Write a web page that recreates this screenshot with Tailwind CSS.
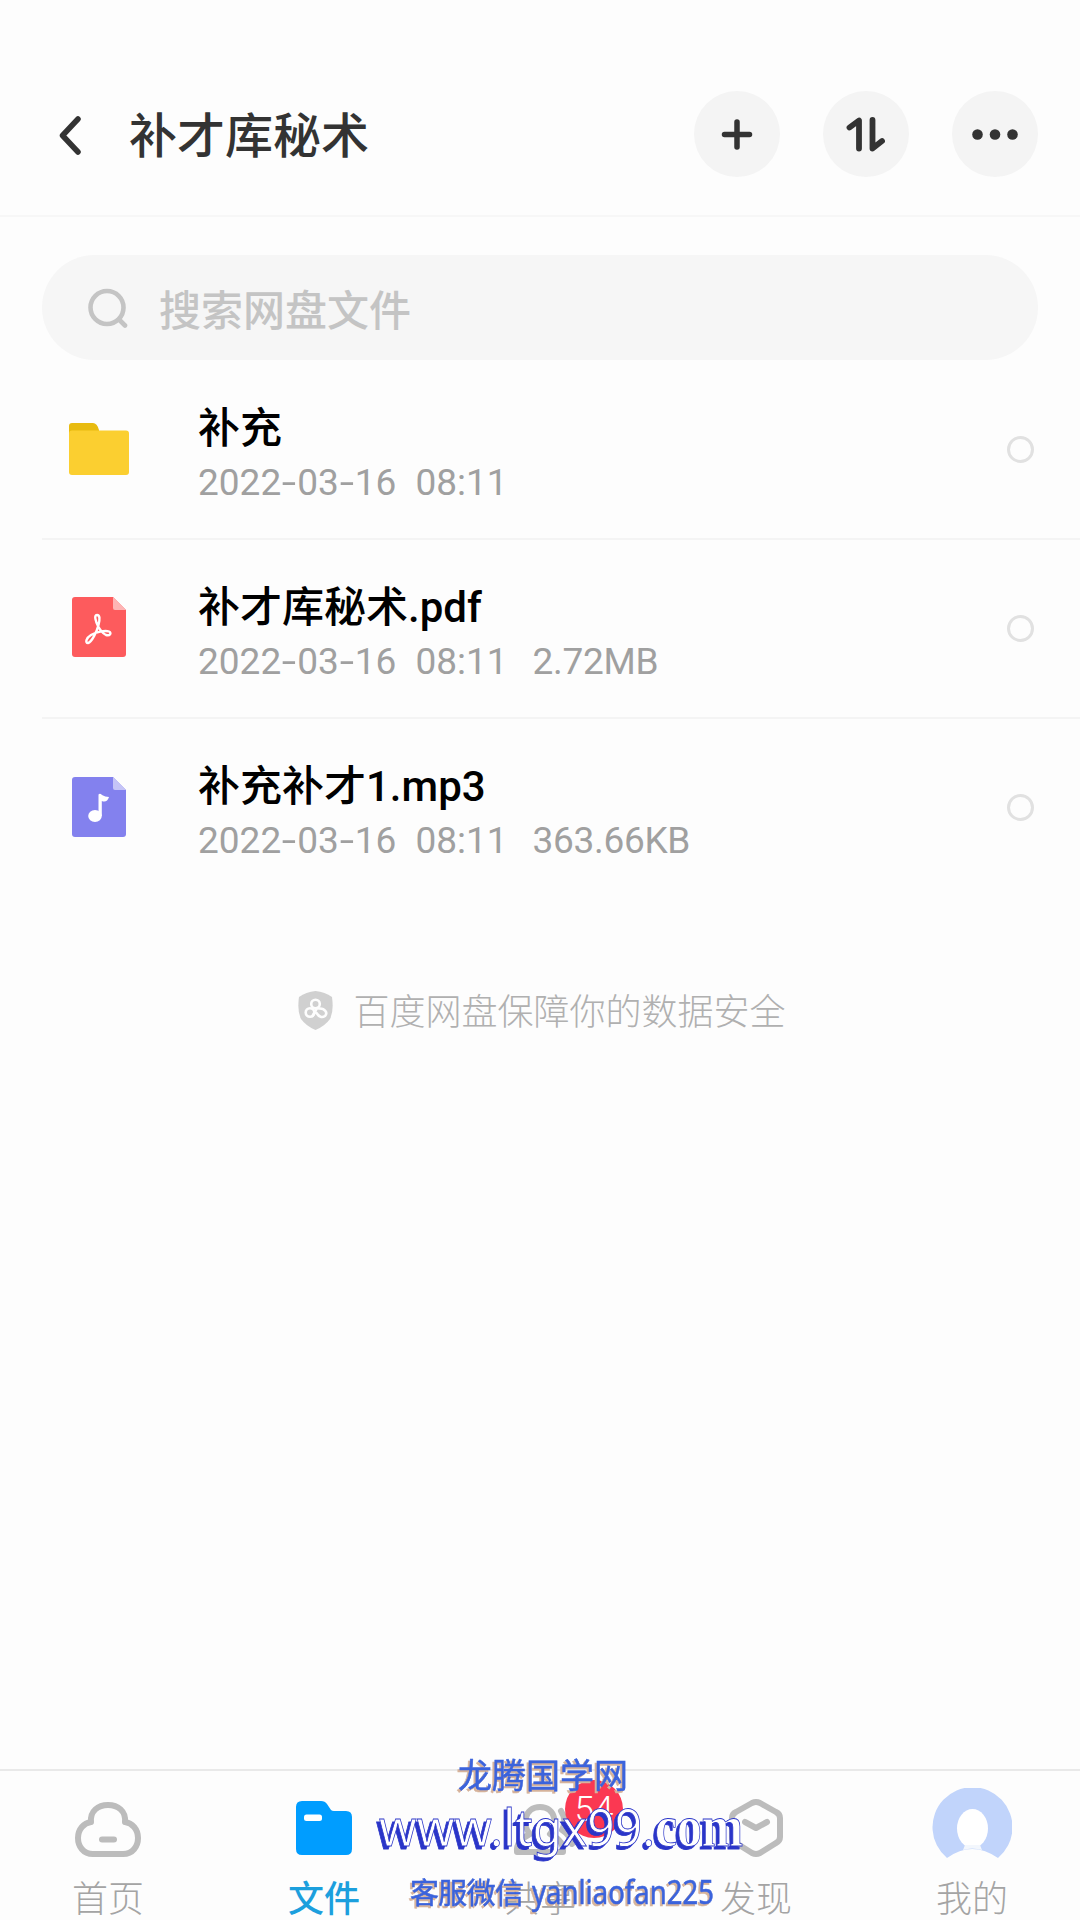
<!DOCTYPE html>
<html lang="zh-CN">

<head>
  <meta charset="UTF-8">
  <meta name="viewport" content="width=device-width, initial-scale=1.0">
  <title>补才库秘术</title>
  <script src="https://cdn.jsdelivr.net/npm/@tailwindcss/browser@4"></script>
</head>

<body class="bg-[#fdfdfd] font-['Roboto','Noto_Sans_CJK_SC',sans-serif]">
  <div class="relative flex flex-col w-[1080px] h-[1920px] overflow-hidden">

    <!-- Header -->
    <header class="flex items-center h-[217px] pt-[52px] pl-[58px] pr-[42px] border-b-2 border-[#f7f7f7]">
      <svg class="w-6 h-10 mt-1" viewBox="0 0 24 40" fill="none" stroke="#333" stroke-width="5.500" stroke-linecap="round" stroke-linejoin="round">
        <path d="M20 3L4.500 19.500L20 36" />
      </svg>
      <h1 class="ml-[47px] pt-1.5 text-[48px] leading-[60px] font-medium text-[#333]">补才库秘术</h1>
      <div class="ml-auto flex gap-[43px]">
        <button class="size-[86px] rounded-full bg-[#f4f4f4]">
          <svg viewBox="0 0 86 86" fill="none" stroke="#333" stroke-width="5.500" stroke-linecap="round">
            <path d="M30.500 43.500H55.500M43 31V56" />
          </svg>
        </button>
        <button class="size-[86px] rounded-full bg-[#f4f4f4]">
          <svg viewBox="0 0 86 86" fill="none" stroke="#333" stroke-width="5.800" stroke-linecap="round" stroke-linejoin="round">
            <path d="M26.500 36.500L36 29.500V57.500M49.500 29V57.500L59 50" />
          </svg>
        </button>
        <button class="size-[86px] rounded-full bg-[#f4f4f4]">
          <svg viewBox="0 0 86 86" fill="#333">
            <circle cx="25.500" cy="43.500" r="5.300" />
            <circle cx="43" cy="43.500" r="5.300" />
            <circle cx="60.500" cy="43.500" r="5.300" />
          </svg>
        </button>
      </div>
    </header>

    <!-- Search -->
    <div class="flex items-center mt-[38px] mx-[42px] h-[105px] pl-[46px] rounded-full bg-[#f6f6f6]">
      <svg class="w-10 h-10" viewBox="0 0 40 40" fill="none" stroke="#c4c4c4" stroke-width="4.600" stroke-linecap="round">
        <circle cx="19" cy="19.500" r="16.500" />
        <path d="M31 31.500L37 37.500" />
      </svg>
      <span class="ml-[31px] pt-2 text-[42px] leading-[60px] font-medium text-[#c4c4c4]">搜索网盘文件</span>
    </div>

    <!-- File list -->
    <ul>
      <li class="flex items-center h-[180px] ml-[42px] pr-[46px] border-b-2 border-[#f4f4f4]">
        <svg class="ml-[27px] w-[60px] h-[52px]" viewBox="0 0 60 52">
          <path d="M0 12V3Q0 0 3 0H24Q28 0 30 7V12Z" fill="#e8bb10" />
          <rect y="7.500" width="60" height="44.500" rx="3" fill="#fbcf30" />
        </svg>
        <div class="ml-[69px] pt-3">
          <p class="text-[42px] leading-[54px] font-medium text-black">补充</p>
          <p class="flex text-[37px] leading-[53px] text-[#a0a0a0]">
            <span>2022</span><span class="w-4 text-center scale-x-140">-</span><span>03</span><span class="w-4 text-center scale-x-140">-</span><span>16</span>
            <span class="ml-[19px]">08:11</span>
          </p>
        </div>
        <span class="ml-auto size-[27px] rounded-full border-3 border-[#e1e1e1]"></span>
      </li>
      <li class="flex items-center h-[179px] ml-[42px] pr-[46px] border-b-2 border-[#f4f4f4]">
        <svg class="ml-[30px] -mt-1 w-[54px] h-[60px]" viewBox="0 0 54 60">
          <path d="M3 0H41L54 13V57Q54 60 51 60H3Q0 60 0 57V3Q0 0 3 0Z" fill="#fd5b5d" />
          <path d="M41 0L54 13H43Q41 13 41 11Z" fill="#feb4b4" />
          <path d="M25 18C21.500 18 24 25 26 29C28 33 30 36 34 38C38 39 40 36 37 34.500C33 33 24 35 19 38C14 41 13 46 16 46C20 45 25 34 26.500 28C28 22 28 18 25 18Z" fill="none" stroke="#fff" stroke-width="2.400" />
        </svg>
        <div class="ml-[72px] pt-[11px]">
          <p class="text-[42px] leading-[54px] font-medium text-black">补才库秘术.pdf</p>
          <p class="flex text-[37px] leading-[53px] text-[#a0a0a0]">
            <span>2022</span><span class="w-4 text-center scale-x-140">-</span><span>03</span><span class="w-4 text-center scale-x-140">-</span><span>16</span>
            <span class="ml-[19px]">08:11</span>
            <span class="ml-[25px] tracking-[-0.3px]">2.72MB</span>
          </p>
        </div>
        <span class="ml-auto size-[27px] rounded-full border-3 border-[#e1e1e1]"></span>
      </li>
      <li class="flex items-center h-[179px] ml-[42px] pr-[46px] border-b-2 border-transparent">
        <svg class="ml-[30px] -mt-0.5 w-[54px] h-[60px]" viewBox="0 0 54 60">
          <path d="M3 0H41L54 13V57Q54 60 51 60H3Q0 60 0 57V3Q0 0 3 0Z" fill="#8381ee" />
          <path d="M41 0L54 13H43Q41 13 41 11Z" fill="#c5c4f7" />
          <ellipse cx="23" cy="39" rx="6.800" ry="6" fill="#fff" />
          <path d="M26.500 39V17.500Q28 16 30 18Q33 20 37 20Q35 26 29.800 24V39Z" fill="#fff" />
        </svg>
        <div class="ml-[72px] pt-[11px]">
          <p class="text-[42px] leading-[54px] font-medium text-black">补充补才1.mp3</p>
          <p class="flex text-[37px] leading-[53px] text-[#a0a0a0]">
            <span>2022</span><span class="w-4 text-center scale-x-140">-</span><span>03</span><span class="w-4 text-center scale-x-140">-</span><span>16</span>
            <span class="ml-[19px]">08:11</span>
            <span class="ml-[25px] tracking-[-0.3px]">363.66KB</span>
          </p>
        </div>
        <span class="ml-auto size-[27px] rounded-full border-3 border-[#e1e1e1]"></span>
      </li>
    </ul>

    <!-- Security note -->
    <div class="flex items-center justify-center gap-5 mt-[83px] pl-1 h-[60px]">
      <svg class="-mt-0.5 w-[35px] h-[39px]" viewBox="0 0 35 39">
        <path d="M17.500 0Q27 1 34 6Q36 20 32 28Q27 35 17.500 39Q8 35 3 28Q-1 20 1 6Q8 1 17.500 0Z" fill="#d0d0d0" />
        <g fill="none" stroke="#fdfdfd" stroke-width="2.600" stroke-linecap="round">
          <circle cx="17.500" cy="13" r="4.300" />
          <circle cx="12" cy="21.500" r="4.300" />
          <path d="M19 17L14.500 25M21 17.500C27 17 30 22 27 25C24 27 21 26 18.500 22" />
        </g>
      </svg>
      <p class="pt-1 text-[36px] leading-[54px] font-light text-[#b0b0b0]">百度网盘保障你的数据安全</p>
    </div>

    <!-- Tab bar -->
    <nav class="grid grid-cols-5 mt-auto h-[151px] border-t-2 border-[#e9e9e9] text-[36px] leading-[50px] text-[#a4a4a4]">
      <a class="flex flex-col items-center">
        <svg class="mt-[17px] w-20 h-20" viewBox="0 0 80 80" fill="none" stroke="#bcbcbc" stroke-width="6" stroke-linejoin="round">
          <path d="M25 66H55C65 66 70 58 70 50C70 41 64 35 57 34C58 23 50 17 40 17C30 17 22 23 23 34C16 35 10 41 10 50C10 58 15 66 25 66Z" />
          <path d="M34 51.500H46" stroke-linecap="round" />
        </svg>
        <span class="mt-[7px] font-light">首页</span>
      </a>
      <a class="flex flex-col items-center text-[#1c9fdd]">
        <svg class="mt-4 w-20 h-20" viewBox="0 0 80 80">
          <path d="M18 14H37Q41 14 43 17L47 23Q48 24 50 24H62Q68 24 68 30V62Q68 68 62 68H18Q12 68 12 62V20Q12 14 18 14Z" fill="#009dff" />
          <rect x="20" y="27.500" width="18" height="6.500" rx="2.500" fill="#fff" />
        </svg>
        <span class="mt-2 font-medium">文件</span>
      </a>
      <a class="relative flex flex-col items-center">
        <svg class="mt-[17px] w-20 h-20" viewBox="0 0 80 80" fill="none" stroke="#bcbcbc" stroke-width="6" stroke-linecap="round" stroke-linejoin="round">
          <path d="M30 46C22 38 24 19 40 19C56 19 58 38 50 46C58 50 64 56 63 64H17C16 56 22 50 30 46Z" />
          <path d="M61 23Q67 32 62 42Q70 47 72 56" />
        </svg>
        <span class="mt-[7px] font-light">共享</span>
        <span class="absolute left-[133px] top-[9px] size-[58px] rounded-full bg-[#fb3852] text-center text-[35px] leading-[60px] font-light text-white">54</span>
      </a>
      <a class="flex flex-col items-center">
        <svg class="mt-4 w-20 h-20" viewBox="0 0 80 80" fill="none" stroke="#bcbcbc" stroke-width="6" stroke-linecap="round" stroke-linejoin="round">
          <path d="M36 16Q40 14 44 16L60 25Q64 27 64 31V50Q64 54 60 56L44 66Q40 68 36 66L20 56Q16 54 16 50V31Q16 27 20 25Z" />
          <path d="M29 35L40 41L51 35" />
        </svg>
        <span class="mt-2 font-light">发现</span>
      </a>
      <a class="flex flex-col items-center">
        <svg class="mt-[17px] w-20 h-20" viewBox="0 0 80 80">
          <path d="M15 70A40 40 0 1 1 66 70Q40 52 15 70Z" fill="#c1d4fb" />
          <ellipse cx="40.500" cy="40.500" rx="15.500" ry="19.500" fill="#fff" />
          <path d="M33 57H48L50 62Q40 59 31 62Z" fill="#f3f7fd" />
        </svg>
        <span class="mt-[7px] font-light">我的</span>
      </a>
    </nav>

    <!-- Site overlay text -->
    <svg class="absolute left-[370px] top-[1745px] w-[380px] h-[175px] overflow-visible font-['Noto_Sans','Noto_Sans_CJK_SC',sans-serif]" viewBox="0 0 380 175">
      <g class="drop-shadow-[-2px_2px_0_#d6b39b]" fill="#3b63dc" stroke="#3b63dc" stroke-width="0.500">
        <text x="88" y="43" font-size="34" textLength="170">龙腾国学网</text>
        <text x="40" y="159" font-size="29" textLength="114">客服微信</text>
        <text x="162" y="159" font-size="32" textLength="182" lengthAdjust="spacingAndGlyphs">yanliaofan225</text>
      </g>
      <g class="drop-shadow-[-3px_3px_0_#2a35c8]" fill="#fff" stroke="#2a35c8" stroke-width="0.800" font-size="51">
        <text x="9" y="101" textLength="276" lengthAdjust="spacingAndGlyphs">www.ltgx99.</text>
        <text x="285" y="101" textLength="88" lengthAdjust="spacingAndGlyphs" class="font-['Liberation_Serif',serif]" font-size="60" font-weight="700">com</text>
      </g>
    </svg>
  </div>
</body>

</html>
